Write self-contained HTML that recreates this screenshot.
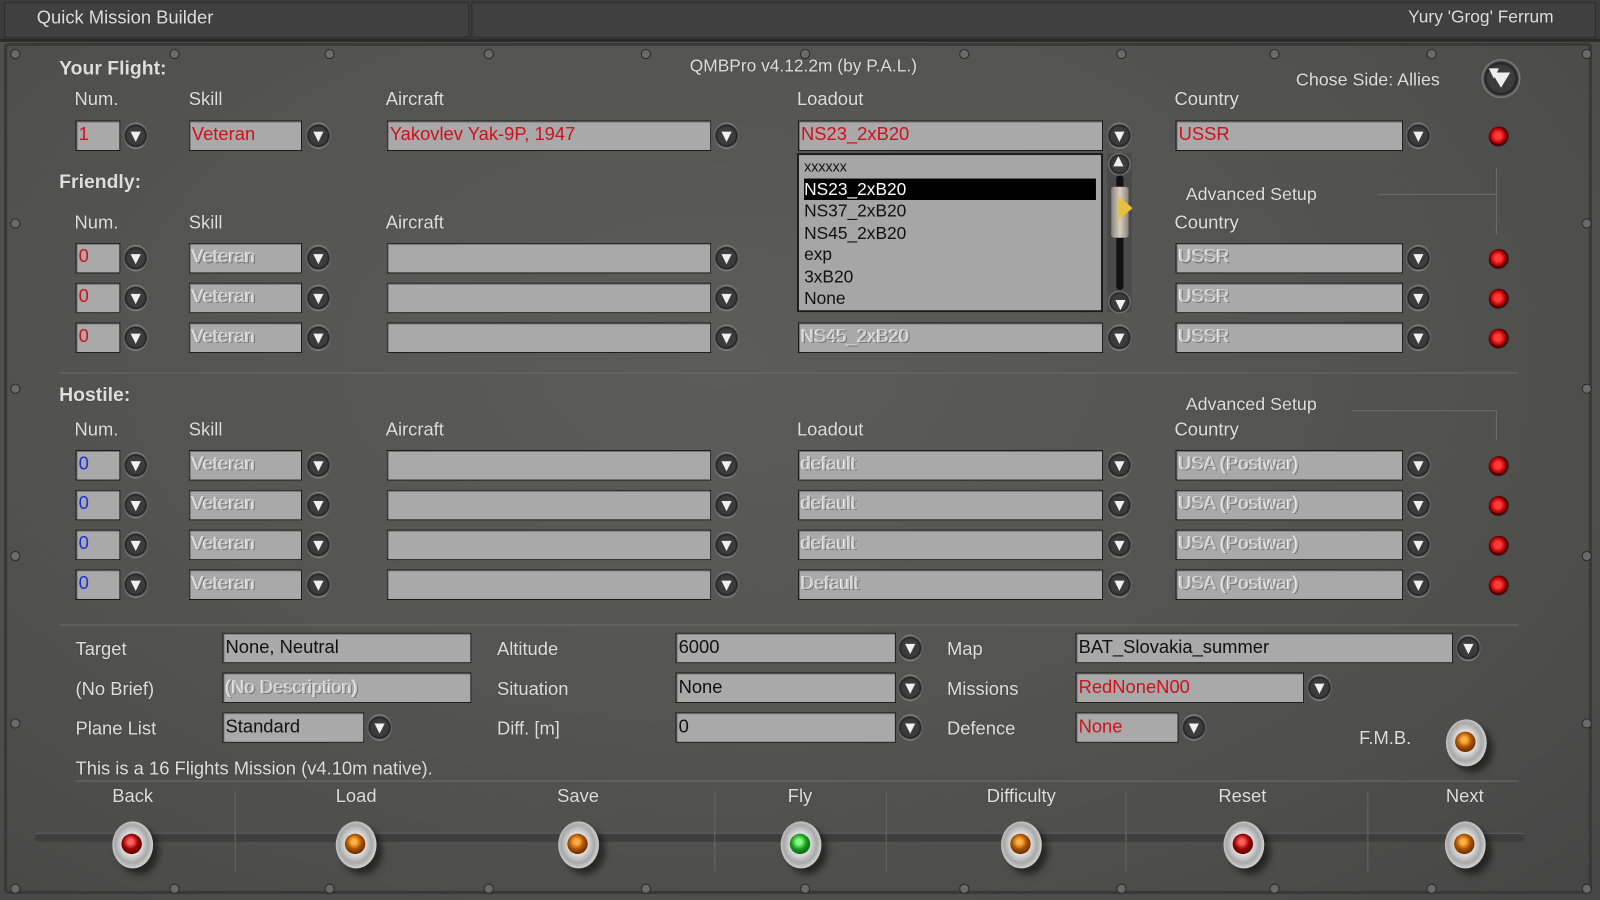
<!DOCTYPE html>
<html><head><meta charset="utf-8">
<style>
html,body{margin:0;padding:0;width:1600px;height:900px;overflow:hidden;background:#444;}
#w{position:absolute;left:0;top:0;width:1568px;height:882px;transform:scale(1.020408);transform-origin:0 0;
background:radial-gradient(ellipse at 45% 40%,#5c5c5a 0%,#545452 45%,#4c4c4b 80%,#454545 100%);
font-family:"Liberation Sans Narrow","Liberation Sans",sans-serif;color:#dcdcdc;overflow:hidden}
.a{position:absolute}
.t{position:absolute;font-size:18px;color:#dedede;white-space:nowrap;text-shadow:0 0 1px #333}
.b{position:absolute;height:27px;background:#a9a9a9;border:1px solid #1a1a1a;box-shadow:inset 1px 1px 0 #777;font-size:18px;line-height:25px;padding-left:2px;box-sizing:border-box;white-space:nowrap;overflow:hidden;font-family:"Liberation Sans",sans-serif}
.r{color:#d0101c}.k{color:#111}.g{color:#c8c8c8;text-shadow:1px 1px 0 #777,-1px 0 0 #eee}.u{color:#1d2fd8}
.ar{position:absolute;width:24px;height:26px;border-radius:50%;background:radial-gradient(circle at 50% 50%,#3c3c3c 0 48%,#222 58%,#8a8a8a 70%,#5a5a5a 85%,#3a3a3a 100%);}
.ar:after{content:"";position:absolute;left:7px;top:9px;border-left:5px solid transparent;border-right:5px solid transparent;border-top:10px solid #f0f0f0}
.lt{position:absolute;width:20px;height:20px;border-radius:50%;background:radial-gradient(circle at 45% 45%,#ff3a3a 0 20%,#b00 45%,#300 60%,#555 75%,#2a2a2a 100%)}
.kn{position:absolute;width:40px;height:46px;border-radius:50%;background:radial-gradient(ellipse at 48% 48%,#e2e2e2 0 30%,#a8a8a8 55%,#d0d0d0 70%,#6a6a6a 100%);box-shadow:6px 6px 6px rgba(0,0,0,.5)}
.kn:after{content:"";position:absolute;left:9px;top:12px;width:20px;height:20px;border-radius:50%}
.o:after{background:radial-gradient(circle at 45% 40%,#ffb040 0 15%,#a85000 45%,#2a1000 100%)}
.rd:after{background:radial-gradient(circle at 45% 40%,#ff6060 0 15%,#900 45%,#200 100%)}
.gr:after{background:radial-gradient(circle at 45% 40%,#8f8 0 15%,#1a9a1a 45%,#032 100%)}
.ln{position:absolute;height:1px;background:#6c6c6a}
.sc{position:absolute;width:8px;height:8px;border-radius:50%;background:#6a6a6a;border:1px solid #2a2a2a}
</style></head><body><div id="w">
<div class="a" style="left:0;top:0;width:1568px;height:38px;background:#3c3c3c;border-bottom:3px solid #2a2a2a"></div>
<div class="a" style="left:4px;top:2px;width:454px;height:33px;background:#404040;border:1px solid #2c2c2c"></div>
<div class="a" style="left:462px;top:2px;width:1100px;height:33px;background:#404040;border:1px solid #2c2c2c"></div>
<div class="t" style="left:36px;top:7px;font-size:18px">Quick Mission Builder</div>
<div class="t" style="left:1380px;top:7px;font-family:'Liberation Sans',sans-serif;font-size:17px">Yury 'Grog' Ferrum</div>
<div class="a" style="left:4px;top:42px;width:1556px;height:834px;border:3px solid #383838;border-radius:4px;box-sizing:border-box"></div>
<div class="sc" style="left:10px;top:48px"></div><div class="sc" style="left:166px;top:48px"></div><div class="sc" style="left:318px;top:48px"></div><div class="sc" style="left:474px;top:48px"></div><div class="sc" style="left:628px;top:48px"></div><div class="sc" style="left:784px;top:48px"></div><div class="sc" style="left:940px;top:48px"></div><div class="sc" style="left:1094px;top:48px"></div><div class="sc" style="left:1244px;top:48px"></div><div class="sc" style="left:1398px;top:48px"></div><div class="sc" style="left:1550px;top:48px"></div>
<div class="sc" style="left:10px;top:214px"></div><div class="sc" style="left:10px;top:376px"></div><div class="sc" style="left:10px;top:540px"></div><div class="sc" style="left:10px;top:704px"></div><div class="sc" style="left:1550px;top:214px"></div><div class="sc" style="left:1550px;top:376px"></div><div class="sc" style="left:1550px;top:540px"></div><div class="sc" style="left:1550px;top:704px"></div>
<div class="sc" style="left:10px;top:866px"></div><div class="sc" style="left:166px;top:866px"></div><div class="sc" style="left:318px;top:866px"></div><div class="sc" style="left:474px;top:866px"></div><div class="sc" style="left:628px;top:866px"></div><div class="sc" style="left:784px;top:866px"></div><div class="sc" style="left:940px;top:866px"></div><div class="sc" style="left:1094px;top:866px"></div><div class="sc" style="left:1244px;top:866px"></div><div class="sc" style="left:1398px;top:866px"></div><div class="sc" style="left:1550px;top:866px"></div>

<div class="t" style="left:58px;top:57px;font-weight:bold;font-size:19px">Your Flight:</div>
<div class="t" style="left:676px;top:55px;font-family:'Liberation Sans',sans-serif;font-size:17px">QMBPro v4.12.2m (by P.A.L.)</div>
<div class="t" style="left:1270px;top:68px;font-family:'Liberation Sans',sans-serif;font-size:17.5px">Chose Side: Allies</div>
<div class="ar" style="left:1452px;top:58px;width:38px;height:38px;"></div>
<div class="a" style="left:1462px;top:71px;border-left:9px solid transparent;border-right:9px solid transparent;border-top:15px solid #eee"></div>
<div class="t" style="left:73px;top:87px">Num.</div><div class="t" style="left:185px;top:87px">Skill</div><div class="t" style="left:378px;top:87px">Aircraft</div><div class="t" style="left:781px;top:87px">Loadout</div><div class="t" style="left:1151px;top:87px">Country</div>
<div class="b r" style="left:74px;top:118px;width:44px;height:30px">1</div><div class="ar" style="left:121px;top:120px"></div>
<div class="b r" style="left:185px;top:118px;width:111px;height:30px">Veteran</div><div class="ar" style="left:300px;top:120px"></div>
<div class="b r" style="left:379px;top:118px;width:318px;height:30px">Yakovlev Yak-9P, 1947</div><div class="ar" style="left:700px;top:120px"></div>
<div class="b r" style="left:782px;top:118px;width:299px;height:30px">NS23_2xB20</div><div class="ar" style="left:1085px;top:120px"></div>
<div class="b r" style="left:1152px;top:118px;width:223px;height:30px">USSR</div><div class="ar" style="left:1378px;top:120px"></div>
<div class="lt" style="left:1459px;top:124px"></div>

<div class="t" style="left:58px;top:168px;font-weight:bold;font-size:19px">Friendly:</div>
<div class="t" style="left:1162px;top:180px;font-family:'Liberation Sans',sans-serif;font-size:17.5px">Advanced Setup</div>
<div class="ln" style="left:1350px;top:190px;width:116px"></div><div class="a" style="left:1466px;top:165px;width:1px;height:65px;background:#6c6c6a"></div>
<div class="t" style="left:73px;top:208px">Num.</div><div class="t" style="left:185px;top:208px">Skill</div><div class="t" style="left:378px;top:208px">Aircraft</div><div class="t" style="left:1151px;top:208px">Country</div>

<div class="b r" style="left:74px;top:238px;width:44px;height:30px">0</div><div class="ar" style="left:121px;top:240px"></div>
<div class="b g" style="left:185px;top:238px;width:111px;height:30px">Veteran</div><div class="ar" style="left:300px;top:240px"></div>
<div class="b" style="left:379px;top:238px;width:318px;height:30px"></div><div class="ar" style="left:700px;top:240px"></div>
<div class="b g" style="left:1152px;top:238px;width:223px;height:30px">USSR</div><div class="ar" style="left:1378px;top:240px"></div><div class="lt" style="left:1459px;top:244px"></div>

<div class="b r" style="left:74px;top:277px;width:44px;height:30px">0</div><div class="ar" style="left:121px;top:279px"></div>
<div class="b g" style="left:185px;top:277px;width:111px;height:30px">Veteran</div><div class="ar" style="left:300px;top:279px"></div>
<div class="b" style="left:379px;top:277px;width:318px;height:30px"></div><div class="ar" style="left:700px;top:279px"></div>
<div class="b g" style="left:1152px;top:277px;width:223px;height:30px">USSR</div><div class="ar" style="left:1378px;top:279px"></div><div class="lt" style="left:1459px;top:283px"></div>

<div class="b r" style="left:74px;top:316px;width:44px;height:30px">0</div><div class="ar" style="left:121px;top:318px"></div>
<div class="b g" style="left:185px;top:316px;width:111px;height:30px">Veteran</div><div class="ar" style="left:300px;top:318px"></div>
<div class="b" style="left:379px;top:316px;width:318px;height:30px"></div><div class="ar" style="left:700px;top:318px"></div>
<div class="b g" style="left:782px;top:316px;width:299px;height:30px">NS45_2xB20</div><div class="ar" style="left:1085px;top:318px"></div>
<div class="b g" style="left:1152px;top:316px;width:223px;height:30px">USSR</div><div class="ar" style="left:1378px;top:318px"></div><div class="lt" style="left:1459px;top:322px"></div>

<div class="a" style="left:781px;top:150px;width:300px;height:156px;background:#a6a6a6;border:2px solid #1c1c1c;box-sizing:border-box;font-family:'Liberation Sans',sans-serif;font-size:17px;color:#111;line-height:21.5px;padding:1px 0 0 5px">
<div style="font-size:14px">xxxxxx</div>
<div style="background:#000;color:#fff;margin-right:5px">NS23_2xB20</div>
<div>NS37_2xB20</div><div>NS45_2xB20</div><div>exp</div><div>3xB20</div><div>None</div></div>
<div class="a" style="left:1085px;top:150px;width:24px;height:156px;background:#4a4a4a"></div>
<div class="a" style="left:1094px;top:172px;width:7px;height:112px;background:#111;border-radius:3px"></div>
<div class="a" style="left:1089px;top:183px;width:17px;height:50px;background:linear-gradient(90deg,#8a8478,#d6d0c2,#8a8478);border-radius:3px"></div>
<div class="ar" style="left:1086px;top:150px;width:22px;height:22px;transform:rotate(180deg)"></div>
<div class="ar" style="left:1086px;top:285px;width:22px;height:22px"></div>
<div class="a" style="left:1096px;top:192px;border-top:12px solid transparent;border-bottom:12px solid transparent;border-left:14px solid #e8c040"></div>

<div class="ln" style="left:58px;top:365px;width:1430px"></div>

<div class="t" style="left:58px;top:377px;font-weight:bold;font-size:19px">Hostile:</div>
<div class="t" style="left:1162px;top:386px;font-family:'Liberation Sans',sans-serif;font-size:17.5px">Advanced Setup</div>
<div class="ln" style="left:1325px;top:402px;width:142px"></div><div class="a" style="left:1466px;top:402px;width:1px;height:30px;background:#6c6c6a"></div>
<div class="t" style="left:73px;top:411px">Num.</div><div class="t" style="left:185px;top:411px">Skill</div><div class="t" style="left:378px;top:411px">Aircraft</div><div class="t" style="left:781px;top:411px">Loadout</div><div class="t" style="left:1151px;top:411px">Country</div>

<div class="b u" style="left:74px;top:441px;width:44px;height:30px">0</div><div class="ar" style="left:121px;top:443px"></div>
<div class="b g" style="left:185px;top:441px;width:111px;height:30px">Veteran</div><div class="ar" style="left:300px;top:443px"></div>
<div class="b" style="left:379px;top:441px;width:318px;height:30px"></div><div class="ar" style="left:700px;top:443px"></div>
<div class="b g" style="left:782px;top:441px;width:299px;height:30px">default</div><div class="ar" style="left:1085px;top:443px"></div>
<div class="b g" style="left:1152px;top:441px;width:223px;height:30px">USA (Postwar)</div><div class="ar" style="left:1378px;top:443px"></div><div class="lt" style="left:1459px;top:447px"></div>

<div class="b u" style="left:74px;top:480px;width:44px;height:30px">0</div><div class="ar" style="left:121px;top:482px"></div>
<div class="b g" style="left:185px;top:480px;width:111px;height:30px">Veteran</div><div class="ar" style="left:300px;top:482px"></div>
<div class="b" style="left:379px;top:480px;width:318px;height:30px"></div><div class="ar" style="left:700px;top:482px"></div>
<div class="b g" style="left:782px;top:480px;width:299px;height:30px">default</div><div class="ar" style="left:1085px;top:482px"></div>
<div class="b g" style="left:1152px;top:480px;width:223px;height:30px">USA (Postwar)</div><div class="ar" style="left:1378px;top:482px"></div><div class="lt" style="left:1459px;top:486px"></div>

<div class="b u" style="left:74px;top:519px;width:44px;height:30px">0</div><div class="ar" style="left:121px;top:521px"></div>
<div class="b g" style="left:185px;top:519px;width:111px;height:30px">Veteran</div><div class="ar" style="left:300px;top:521px"></div>
<div class="b" style="left:379px;top:519px;width:318px;height:30px"></div><div class="ar" style="left:700px;top:521px"></div>
<div class="b g" style="left:782px;top:519px;width:299px;height:30px">default</div><div class="ar" style="left:1085px;top:521px"></div>
<div class="b g" style="left:1152px;top:519px;width:223px;height:30px">USA (Postwar)</div><div class="ar" style="left:1378px;top:521px"></div><div class="lt" style="left:1459px;top:525px"></div>

<div class="b u" style="left:74px;top:558px;width:44px;height:30px">0</div><div class="ar" style="left:121px;top:560px"></div>
<div class="b g" style="left:185px;top:558px;width:111px;height:30px">Veteran</div><div class="ar" style="left:300px;top:560px"></div>
<div class="b" style="left:379px;top:558px;width:318px;height:30px"></div><div class="ar" style="left:700px;top:560px"></div>
<div class="b g" style="left:782px;top:558px;width:299px;height:30px">Default</div><div class="ar" style="left:1085px;top:560px"></div>
<div class="b g" style="left:1152px;top:558px;width:223px;height:30px">USA (Postwar)</div><div class="ar" style="left:1378px;top:560px"></div><div class="lt" style="left:1459px;top:564px"></div>

<div class="ln" style="left:58px;top:612px;width:1430px"></div>

<div class="t" style="left:74px;top:626px">Target</div>
<div class="b k" style="left:218px;top:620px;width:244px;height:30px;line-height:26px">None, Neutral</div>
<div class="t" style="left:74px;top:665px">(No Brief)</div>
<div class="b g" style="left:218px;top:659px;width:244px;height:30px;line-height:26px">(No Description)</div>
<div class="t" style="left:74px;top:704px">Plane List</div>
<div class="b k" style="left:218px;top:698px;width:139px;height:30px;line-height:26px">Standard</div><div class="ar" style="left:360px;top:700px"></div>

<div class="t" style="left:487px;top:626px">Altitude</div>
<div class="b k" style="left:662px;top:620px;width:216px;height:30px;line-height:26px">6000</div><div class="ar" style="left:880px;top:622px"></div>
<div class="t" style="left:487px;top:665px">Situation</div>
<div class="b k" style="left:662px;top:659px;width:216px;height:30px;line-height:26px">None</div><div class="ar" style="left:880px;top:661px"></div>
<div class="t" style="left:487px;top:704px">Diff. [m]</div>
<div class="b k" style="left:662px;top:698px;width:216px;height:30px;line-height:26px">0</div><div class="ar" style="left:880px;top:700px"></div>

<div class="t" style="left:928px;top:626px">Map</div>
<div class="b k" style="left:1054px;top:620px;width:370px;height:30px;line-height:26px">BAT_Slovakia_summer</div><div class="ar" style="left:1427px;top:622px"></div>
<div class="t" style="left:928px;top:665px">Missions</div>
<div class="b r" style="left:1054px;top:659px;width:224px;height:30px;line-height:26px">RedNoneN00</div><div class="ar" style="left:1281px;top:661px"></div>
<div class="t" style="left:928px;top:704px">Defence</div>
<div class="b r" style="left:1054px;top:698px;width:101px;height:30px;line-height:26px">None</div><div class="ar" style="left:1158px;top:700px"></div>

<div class="t" style="left:1332px;top:713px">F.M.B.</div>
<div class="kn o" style="left:1417px;top:705px"></div>

<div class="t" style="left:74px;top:743px">This is a 16 Flights Mission (v4.10m native).</div>
<div class="ln" style="left:74px;top:765px;width:1414px"></div>

<div class="a" style="left:34px;top:816px;width:1460px;height:8px;background:#3e3e3e;border-radius:4px;border-top:1px solid #666"></div>
<div class="a" style="left:230px;top:775px;width:1px;height:80px;background:#666"></div>
<div class="a" style="left:700px;top:775px;width:1px;height:80px;background:#666"></div>
<div class="a" style="left:868px;top:775px;width:1px;height:80px;background:#666"></div>
<div class="a" style="left:1103px;top:775px;width:1px;height:80px;background:#666"></div>
<div class="a" style="left:1340px;top:775px;width:1px;height:80px;background:#666"></div>
<div class="t" style="left:110px;top:770px">Back</div><div class="kn rd" style="left:110px;top:805px"></div>
<div class="t" style="left:329px;top:770px">Load</div><div class="kn o" style="left:329px;top:805px"></div>
<div class="t" style="left:546px;top:770px">Save</div><div class="kn o" style="left:547px;top:805px"></div>
<div class="t" style="left:772px;top:770px">Fly</div><div class="kn gr" style="left:765px;top:805px"></div>
<div class="t" style="left:967px;top:770px">Difficulty</div><div class="kn o" style="left:981px;top:805px"></div>
<div class="t" style="left:1194px;top:770px">Reset</div><div class="kn rd" style="left:1199px;top:805px"></div>
<div class="t" style="left:1417px;top:770px">Next</div><div class="kn o" style="left:1416px;top:805px"></div>
</div></body></html>
